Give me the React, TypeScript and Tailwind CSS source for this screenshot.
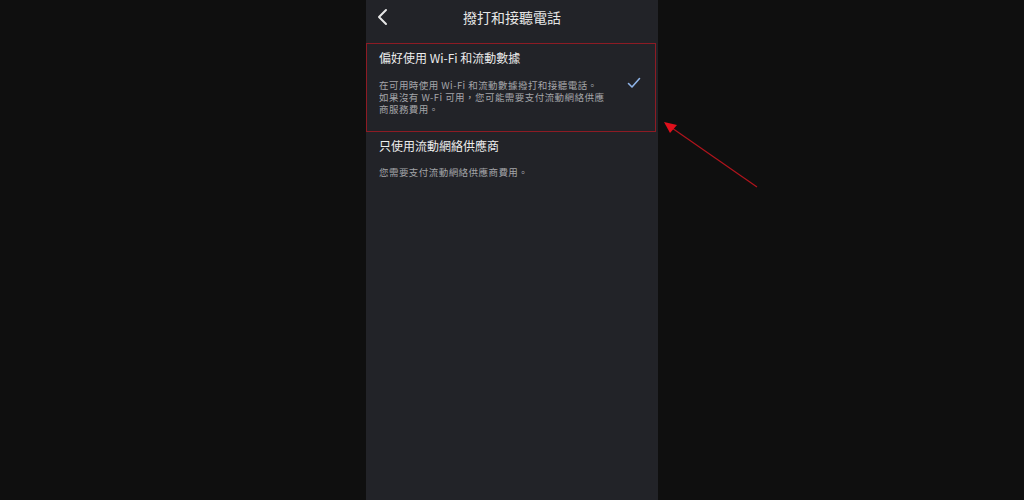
import React from "react";

export default function App() {
  const font = { fontFamily: '"Noto Sans CJK TC", "Noto Sans", sans-serif' };
  const line = "h-[12px] leading-[12px] overflow-visible whitespace-nowrap";
  return (
    <div className="w-[1024px] h-[500px] bg-[#0f0f0f] flex justify-center relative overflow-hidden" style={font}>
      <div className="w-[292px] h-[500px] bg-[#222328] flex flex-col">
        <div className="h-[34px] flex items-center relative">
          <svg className="absolute left-[10px] top-[8px]" width="14" height="18" viewBox="0 0 14 18">
            <path d="M10 2 L3 9 L10 16" stroke="#e6e6e6" strokeWidth="2" fill="none" strokeLinecap="round" strokeLinejoin="round" />
          </svg>
          <div className="w-full text-center text-[14px] text-[#e6e6e6] leading-none">撥打和接聽電話</div>
        </div>
        <div className="mt-[9px] h-[89px] border border-[#8d1b24] mr-[2px] flex items-start pl-[12px] pr-[10px]">
          <div className="flex-1 pt-[6px]">
            <div className="text-[12px] text-[#ececec] leading-[16px]">偏好使用 Wi-Fi 和流動數據</div>
            <div className="mt-[13px] text-[9.5px] text-[#a4a5a8] tracking-[0.45px] flex flex-col">
              <div className={line}>在可用時使用 Wi-Fi 和流動數據撥打和接聽電話。</div>
              <div className={line}>如果沒有 W-Fi 可用，您可能需要支付流動網絡供應</div>
              <div className={line}>商服務費用。</div>
            </div>
          </div>
          <svg className="mt-[33px] mr-[4px]" width="14" height="12" viewBox="0 0 14 12">
            <path d="M1.5 6.5 L5 10 L12.5 1.5" stroke="#8fb4e8" strokeWidth="1.6" fill="none" strokeLinecap="round" strokeLinejoin="round" />
          </svg>
        </div>
        <div className="pl-[13px] pt-[6px]">
          <div className="text-[12px] text-[#ececec] leading-[16px]">只使用流動網絡供應商</div>
          <div className="mt-[12px] text-[9.5px] text-[#a4a5a8] leading-[12px] tracking-[0.45px]">您需要支付流動網絡供應商費用。</div>
        </div>
      </div>
      <svg className="absolute left-0 top-0" width="1024" height="500" viewBox="0 0 1024 500">
        <line x1="757" y1="187" x2="672" y2="128" stroke="#b0141c" strokeWidth="1.2" />
        <polygon points="664,122 677,125 670,133" fill="#e0101c" />
      </svg>
    </div>
  );
}
